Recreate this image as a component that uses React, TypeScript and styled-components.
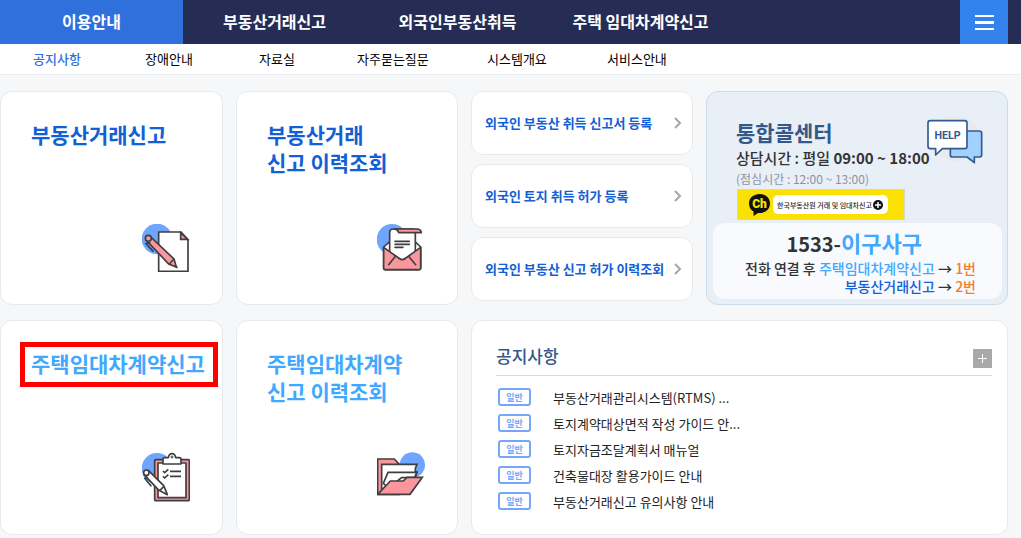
import React from "react";
import styled, { createGlobalStyle, css } from "styled-components";

const GlobalStyle = createGlobalStyle`
  * { box-sizing: border-box; }
  body {
    margin: 0;
    background: #f5f7f9;
    color: #333;
    font-family: "Noto Sans CJK KR", "Noto Sans", sans-serif;
    font-size: 13px;
  }
  a { color: inherit; text-decoration: none; }
  ul { list-style: none; margin: 0; padding: 0; }
  h2, p { margin: 0; }
  svg { display: block; flex: none; }
`;

const TopBar = styled.header`
  display: flex;
  justify-content: space-between;
  height: 44px;
  padding-right: 13px;
  background: #252d55;
`;

const MainNav = styled.nav`
  display: flex;
  flex: 0 1 732px;
`;

const MainTab = styled.a<{ $active?: boolean }>`
  display: flex;
  flex: 1;
  align-items: center;
  justify-content: center;
  padding-bottom: 2px;
  font-size: 16px;
  font-weight: 700;
  white-space: nowrap;
  color: #fff;
  background: ${(p) => (p.$active ? "#3070dc" : "transparent")};
`;

const MenuButton = styled.button`
  display: flex;
  align-items: center;
  justify-content: center;
  width: 48px;
  border: 0;
  padding: 0;
  background: #3482eb;
`;

const SubNav = styled.nav`
  display: grid;
  grid-template-columns: 112px 114px 98px 130px 120px auto;
  align-items: center;
  height: 31px;
  padding: 0 0 2px 33px;
  border-bottom: 1px solid #e9ebed;
  background: #fff;
`;

const SubLink = styled.a<{ $active?: boolean }>`
  color: ${(p) => (p.$active ? "#3070dc" : "#000")};
  font-weight: ${(p) => (p.$active ? 500 : 400)};
  white-space: nowrap;
`;

const Board = styled.main`
  display: grid;
  grid-template-columns: minmax(0, 223fr) repeat(2, minmax(0, 222fr)) minmax(0, 302fr);
  grid-auto-rows: minmax(214px, auto);
  gap: 15px 13px;
  padding: 16px 13px 4px 0;
`;

const panel = css`
  border: 1px solid #e7e9eb;
  border-radius: 12px;
  background: #fff;
`;

const ServiceCard = styled.a<{ $tone: "deep" | "light" }>`
  ${panel}
  display: flex;
  flex-direction: column;
  align-items: flex-start;
  justify-content: space-between;
  padding: 28px 32px 32px 30px;
  color: ${(p) => (p.$tone === "deep" ? "#1260d6" : "#40a9ff")};

  svg { align-self: flex-end; }
`;

const ServiceTitle = styled.h2<{ $marked?: boolean }>`
  position: relative;
  font-size: 21px;
  font-weight: 700;
  line-height: 28px;
  white-space: nowrap;

  ${(p) =>
    p.$marked &&
    css`
      &::after {
        content: "";
        position: absolute;
        inset: -7px -13px -10px -11px;
        border: 5px solid #fe0000;
      }
    `}
`;

const LinkStack = styled.div`
  display: flex;
  flex-direction: column;
  gap: 9px;
`;

const LinkCard = styled.a`
  ${panel}
  display: flex;
  align-items: center;
  justify-content: space-between;
  height: 64px;
  padding: 0 10px 1px 13px;
  color: #1260d6;
  font-weight: 700;
  white-space: nowrap;
`;

const CallCard = styled.section`
  ${panel}
  display: flex;
  flex-direction: column;
  border-color: #cbdaea;
  background: #e8eff7;
  padding: 23px 5px 5px 6px;
`;

const CallHead = styled.div`
  display: flex;
  justify-content: space-between;
  padding: 0 18px 0 23px;
  white-space: nowrap;
`;

const CallTitle = styled.h2`
  margin-top: 2px;
  color: #34588a;
  font-size: 21px;
  font-weight: 700;
  line-height: 30px;
`;

const Hours = styled.p`
  font-size: 15px;
  font-weight: 500;
  line-height: 22px;

  b { font-weight: 700; }
`;

const Lunch = styled.p`
  color: #8d949c;
  font-size: 12px;
  line-height: 20px;
`;

const HeadText = styled.div`
  width: 190px;
`;

const ChannelLink = styled.a`
  display: flex;
  align-items: center;
  gap: 3px;
  width: 168px;
  height: 31px;
  margin: 0 0 3px 24px;
  padding-left: 11px;
  border: 1px solid #d5d8c8;
  background: #fbe103;
`;

const ChannelPill = styled.span`
  display: flex;
  align-items: center;
  justify-content: space-between;
  width: 115px;
  height: 19px;
  padding: 0 5px 0 4px;
  border-radius: 5px;
  background: #fff;
  color: #222;
  font-size: 7px;
  font-weight: 500;
  white-space: nowrap;
`;

const PhoneBox = styled.div`
  height: 76px;
  padding: 4px 26px 0 0;
  border-radius: 12px;
  background: #f9fafd;
  font-size: 14px;
  font-weight: 500;
  line-height: 18px;
  text-align: right;
  white-space: nowrap;
`;

const PhoneNumber = styled.p`
  padding-right: 54px;
  font-size: 20px;
  font-weight: 700;
  line-height: 30px;
`;

const Tint = styled.span<{ $color: string; $large?: boolean }>`
  color: ${(p) => p.$color};
  ${(p) => p.$large && "font-size: 22px;"}
`;

const NoticeCard = styled.section`
  ${panel}
  grid-column: span 2;
  padding: 21px 15px 20px 24px;
`;

const NoticeHead = styled.div`
  display: flex;
  align-items: center;
  justify-content: space-between;
  height: 34px;
  border-bottom: 1px solid #d9dcdf;
  margin-bottom: 8px;
`;

const NoticeTitle = styled.h2`
  color: #34588a;
  font-size: 17px;
  font-weight: 500;
  line-height: 26px;
  padding-bottom: 6px;
`;

const MoreButton = styled.button`
  display: flex;
  align-items: center;
  justify-content: center;
  width: 19px;
  height: 19px;
  padding: 0;
  border: 0;
  background: #a9a9a9;
`;

const NoticeRow = styled.li`
  display: flex;
  align-items: center;
  gap: 22px;
  height: 26px;
  padding-left: 2px;
  color: #222;
  white-space: nowrap;
`;

const Badge = styled.span`
  display: flex;
  align-items: center;
  justify-content: center;
  width: 33px;
  height: 18px;
  border: 2px solid #74a7fb;
  border-radius: 3px;
  color: #74a7fb;
  font-size: 9px;
  font-weight: 700;
`;

const INK = "#3f3f41";
const PINK = "#fb979c";
const BLUE = "#6fa5ff";

const ContractIcon = () => (
  <svg width="48" height="48" viewBox="36 27 144 144" fill="none" stroke={INK} strokeWidth="5">
    <circle cx="81" cy="72" r="46" fill={BLUE} stroke="none" />
    <path d="M86 51H153L174 74V169H86Z" fill="#fff" />
    <path d="M152 53V73H173Z" fill={PINK} />
    <path d="M49 76 59 63 132 132 139 156 116 147Z" fill={PINK} />
    <circle cx="55" cy="70" r="9" fill={PINK} />
    <path d="M61 82 48 86 70 110M118 147 132 132M134 151 142 158" />
  </svg>
);

const LetterIcon = () => (
  <svg width="48" height="48" viewBox="36 27 144 144" fill="none" stroke={INK} strokeWidth="5" strokeLinejoin="round" strokeLinecap="round">
    <circle cx="81" cy="73" r="46" fill={BLUE} stroke="none" />
    <path d="M56 96 74 80H150L167 96V160Q167 164 162 164H61Q56 164 56 160Z" fill="#fff" />
    <path d="M74 112V51Q75 41 86 42H146Q152 45 151 55V112L112 136Z" fill="#fff" />
    <path d="M88 42H158Q168 43 169 53H101Q99 43 88 42Z" fill={PINK} />
    <path d="M56 97 102 130Q112 138 121 130L167 97V160Q167 164 162 164H61Q56 164 56 160Z" fill={PINK} />
    <path d="M90 125 71 149M132 125 152 149M90 79H133M90 88H133M90 97H114" />
  </svg>
);

const ChecklistIcon = () => (
  <svg width="48" height="50" viewBox="36 22 144 150" fill="none" stroke={INK} strokeWidth="5" strokeLinejoin="round">
    <circle cx="81" cy="71" r="46" fill={BLUE} stroke="none" />
    <rect x="74" y="45" width="104" height="123" rx="3" fill={PINK} />
    <rect x="84" y="55" width="84" height="104" fill="#fff" />
    <path d="M99 58V43Q99 39 104 39H115Q117 27 126 27T137 39H148Q153 39 153 43V58Z" fill="#fff" />
    <circle cx="126" cy="37" r="3" strokeWidth="3" />
    <path d="M99 79 104 84 115 74M99 95 104 100 115 90M120 80H153M120 95H153" />
    <path d="M42 90 55 77 101 123 112 150 87 137Z" fill="#fff" />
    <circle cx="49" cy="84" r="8" fill="#fff" />
    <path d="M54 98 44 101 64 125M89 138 103 124" />
  </svg>
);

const FolderIcon = () => (
  <svg width="48" height="50" viewBox="36 22 144 150" fill="none" stroke={INK} strokeWidth="5">
    <circle cx="142" cy="61" r="38" fill={BLUE} stroke="none" />
    <path d="M38 43H88L103 59V149H38Z" fill={PINK} />
    <path d="M50 140V59H156L151 71V82H156L151 98L130 120Z" fill="#fff" />
    <path d="M55 116 69 83H155L149 99H110L70 130Z" fill="#fff" />
    <path d="M38 149 76 109H115L126 98H172L135 149Z" fill={PINK} />
  </svg>
);

const HelpIcon = () => (
  <svg width="58" height="49" viewBox="678 345 174 147" fill="none" stroke="#335b91" strokeWidth="5" strokeLinejoin="round">
    <circle cx="768" cy="415" r="69" fill="#e9eaed" stroke="none" />
    <path d="M758 393H838Q845 393 845 400V465Q845 471 838 471H823V488L801 471H758Q751 471 751 464V400Q751 393 758 393Z" fill="#a1d1ff" />
    <path d="M691 362H794Q801 362 801 369V439Q801 446 794 446H727L707 465V446H691Q684 446 684 439V369Q684 362 691 362Z" fill="#fff" />
    <text x="743" y="416" fill="#335b91" stroke="none" textAnchor="middle" fontFamily="'Liberation Sans Narrow', Roboto, sans-serif" fontWeight="700" fontSize="32">
      HELP
    </text>
  </svg>
);

const ChannelLogo = () => (
  <svg width="21" height="23" viewBox="0 0 21 23">
    <path d="M10.500 1C16 1 21 4.500 21 10.500S16 20 10.500 20H9L4.500 23V18.500C2 17 0 14.500 0 10.500 0 4.500 5 1 10.500 1Z" fill="#111" />
    <text x="10.500" y="15" fill="#fbe103" textAnchor="middle" fontFamily="Roboto, sans-serif" fontWeight="900" fontSize="12">
      Ch
    </text>
  </svg>
);

const Chevron = () => (
  <svg width="8" height="12" viewBox="0 0 8 12" fill="none" stroke="#a6a6a6" strokeWidth="2">
    <path d="M1 1 6 6 1 11" />
  </svg>
);

const mainTabs = ["이용안내", "부동산거래신고", "외국인부동산취득", "주택 임대차계약신고"];
const subLinks = ["공지사항", "장애안내", "자료실", "자주묻는질문", "시스템개요", "서비스안내"];
const foreignLinks = [
  "외국인 부동산 취득 신고서 등록",
  "외국인 토지 취득 허가 등록",
  "외국인 부동산 신고 허가 이력조회",
];
const notices = [
  "부동산거래관리시스템(RTMS) ...",
  "토지계약대상면적 작성 가이드 안...",
  "토지자금조달계획서 매뉴얼",
  "건축물대장 활용가이드 안내",
  "부동산거래신고 유의사항 안내",
];

export default function App() {
  return (
    <>
      <GlobalStyle />
      <TopBar>
        <MainNav>
          {mainTabs.map((label, i) => (
            <MainTab key={label} href="#" $active={i === 0}>
              {label}
            </MainTab>
          ))}
        </MainNav>
        <MenuButton type="button" aria-label="전체메뉴">
          <svg width="19" height="15" viewBox="0 0 19 15" fill="#fff">
            <path d="M0 0H19V2H0ZM0 6H19V9H0ZM0 13H19V15H0Z" />
          </svg>
        </MenuButton>
      </TopBar>
      <SubNav>
        {subLinks.map((label, i) => (
          <SubLink key={label} href="#" $active={i === 0}>
            {label}
          </SubLink>
        ))}
      </SubNav>
      <Board>
        <ServiceCard href="#" $tone="deep">
          <ServiceTitle>부동산거래신고</ServiceTitle>
          <ContractIcon />
        </ServiceCard>
        <ServiceCard href="#" $tone="deep">
          <ServiceTitle>
            부동산거래
            <br />
            신고 이력조회
          </ServiceTitle>
          <LetterIcon />
        </ServiceCard>
        <LinkStack>
          {foreignLinks.map((label) => (
            <LinkCard key={label} href="#">
              {label}
              <Chevron />
            </LinkCard>
          ))}
        </LinkStack>
        <CallCard>
          <CallHead>
            <HeadText>
              <CallTitle>통합콜센터</CallTitle>
              <Hours>
                상담시간 : 평일 <b>09:00 ~ 18:00</b>
              </Hours>
              <Lunch>(점심시간 : 12:00 ~ 13:00)</Lunch>
            </HeadText>
            <HelpIcon />
          </CallHead>
          <ChannelLink href="#">
            <ChannelLogo />
            <ChannelPill>
              한국부동산원 거래 및 임대차신고
              <svg width="10" height="10" viewBox="0 0 10 10">
                <circle cx="5" cy="5" r="5" fill="#111" />
                <path d="M5 2V8M2 5H8" stroke="#fff" strokeWidth="1.500" />
              </svg>
            </ChannelPill>
          </ChannelLink>
          <PhoneBox>
            <PhoneNumber>
              1533-
              <Tint $color="#40a9ff" $large>
                이구사구
              </Tint>
            </PhoneNumber>
            <p>
              전화 연결 후 <Tint $color="#40a9ff">주택임대차계약신고</Tint> → <Tint $color="#f47b30">1번</Tint>
            </p>
            <p>
              <Tint $color="#1260d6">부동산거래신고</Tint> → <Tint $color="#f47b30">2번</Tint>
            </p>
          </PhoneBox>
        </CallCard>
        <ServiceCard href="#" $tone="light">
          <ServiceTitle $marked>주택임대차계약신고</ServiceTitle>
          <ChecklistIcon />
        </ServiceCard>
        <ServiceCard href="#" $tone="light">
          <ServiceTitle>
            주택임대차계약
            <br />
            신고 이력조회
          </ServiceTitle>
          <FolderIcon />
        </ServiceCard>
        <NoticeCard>
          <NoticeHead>
            <NoticeTitle>공지사항</NoticeTitle>
            <MoreButton type="button" aria-label="공지사항 더보기">
              <svg width="9" height="9" viewBox="0 0 9 9" stroke="#fff">
                <path d="M4.500 0V9M0 4.500H9" />
              </svg>
            </MoreButton>
          </NoticeHead>
          <ul>
            {notices.map((title) => (
              <NoticeRow key={title}>
                <Badge>일반</Badge>
                <a href="#">{title}</a>
              </NoticeRow>
            ))}
          </ul>
        </NoticeCard>
      </Board>
    </>
  );
}
